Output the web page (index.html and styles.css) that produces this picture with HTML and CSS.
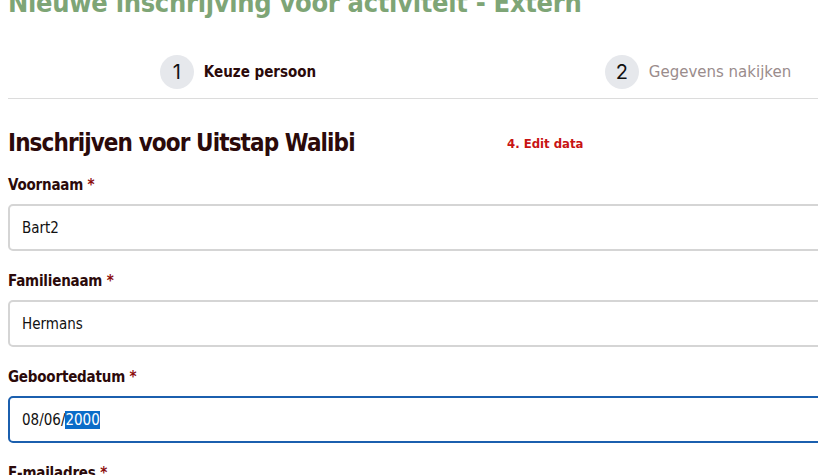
FILE: index.html
```html
<!DOCTYPE html>
<html lang="nl">
<head>
<meta charset="utf-8">
<title>Nieuwe inschrijving voor activiteit - Extern</title>
<link rel="stylesheet" href="styles.css">
</head>
<body>
<div class="page">
  <h1 class="page-title">Nieuwe inschrijving voor activiteit - Extern</h1>
  <div class="stepper">
    <div class="step step-active"><span class="step-num">1</span><span class="step-label">Keuze persoon</span></div>
    <div class="step"><span class="step-num">2</span><span class="step-label">Gegevens nakijken</span></div>
  </div>
  <div class="form-head">
    <h2 class="form-title">Inschrijven voor Uitstap Walibi</h2>
    <span class="debug-note">4. Edit data</span>
  </div>
  <div class="field">
    <label class="field-label">Voornaam <span class="req">*</span></label>
    <div class="input">Bart2</div>
  </div>
  <div class="field">
    <label class="field-label">Familienaam <span class="req">*</span></label>
    <div class="input">Hermans</div>
  </div>
  <div class="field">
    <label class="field-label">Geboortedatum <span class="req">*</span></label>
    <div class="input input-focus">08/06/<span class="sel">2000</span></div>
  </div>
  <div class="field">
    <label class="field-label">E-mailadres <span class="req">*</span></label>
    <div class="input"></div>
  </div>
</div>
</body>
</html>
```

FILE: styles.css
```css
html, body {
  margin: 0;
  padding: 0;
  overflow: hidden;
  background: #fff;
}
body {
  font-family: "DejaVu Sans Condensed", "Liberation Sans", sans-serif;
  color: #2b0a0a;
}
.page {
  width: 920px;
  margin-left: 8px;
}
.page-title {
  margin: -13px 0 0 0;
  font-size: 27px;
  line-height: 32px;
  letter-spacing: -0.3px;
  font-weight: bold;
  color: #7ea576;
}
.stepper {
  display: grid;
  grid-template-columns: 1fr 1fr;
  margin-top: 36px;
  padding-bottom: 9px;
  border-bottom: 1px solid #dcdcdc;
}
.step {
  display: flex;
  align-items: center;
  justify-content: center;
  gap: 10px;
}
.step-num {
  width: 34px;
  height: 34px;
  border-radius: 50%;
  background: #e6e8ec;
  display: flex;
  align-items: center;
  justify-content: center;
  font-family: "Inter", "Liberation Sans", sans-serif;
  font-size: 20px;
  color: #111;
}
.step-label {
  font-family: "DejaVu Sans", sans-serif;
  font-size: 15px;
  color: #9a8c8c;
}
.step-active .step-label {
  font-family: "DejaVu Sans Condensed", sans-serif;
  font-weight: bold;
  color: #2b0a0a;
}
.form-head {
  display: grid;
  grid-template-columns: 499px auto;
  align-items: baseline;
  margin-top: 28px;
}
.form-title {
  margin: 0;
  font-size: 24px;
  line-height: 32px;
  letter-spacing: -0.9px;
  font-weight: bold;
  color: #2b0a0a;
}
.debug-note {
  font-size: 13px;
  font-weight: bold;
  color: #c81414;
  position: relative;
  top: -3px;
}
.field {
  margin-top: 20px;
}
.form-head + .field {
  margin-top: 16px;
}
.field-label {
  display: block;
  font-size: 15px;
  letter-spacing: -0.2px;
  font-weight: bold;
  line-height: 20px;
  margin-bottom: 9px;
}
.req {
  color: #8b0d0d;
}
.input {
  box-sizing: border-box;
  height: 47px;
  border: 2px solid #d5d5d5;
  border-radius: 5px;
  padding: 0 12px;
  display: flex;
  align-items: center;
  font-size: 15px;
  color: #111;
}
.input-focus {
  border-color: #1b5fae;
}
.sel {
  background: #0a6cc8;
  color: #fff;
}
```
